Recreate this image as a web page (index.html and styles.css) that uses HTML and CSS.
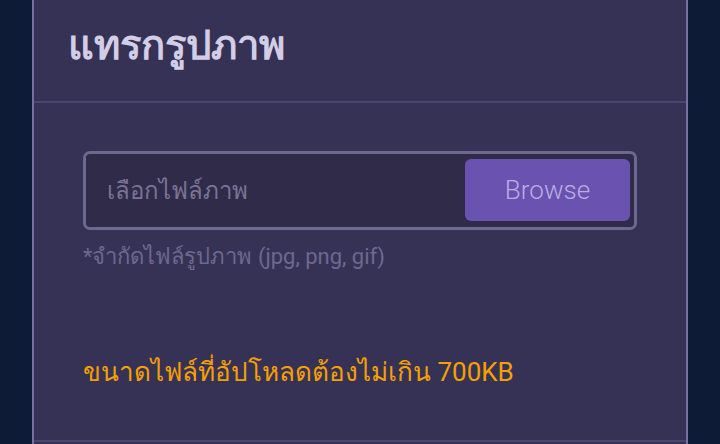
FILE: index.html
```html
<!DOCTYPE html>
<html lang="th">
<head>
<meta charset="utf-8">
<title>แทรกรูปภาพ</title>
<link rel="stylesheet" href="styles.css">
</head>
<body>
<div class="modal">
  <div class="modal-header">
    <h1 class="modal-title">แทรกรูปภาพ</h1>
  </div>
  <div class="modal-body">
    <div class="file-group">
      <div class="file-placeholder">เลือกไฟล์ภาพ</div>
      <button class="browse-btn" type="button">Browse</button>
    </div>
    <div class="file-hint">*จำกัดไฟล์รูปภาพ (jpg, png, gif)</div>
    <div class="file-warning">ขนาดไฟล์ที่อัปโหลดต้องไม่เกิน 700KB</div>
  </div>
</div>
</body>
</html>
```
FILE: styles.css
```css
html, body {
  margin: 0;
  padding: 0;
  height: 100%;
  overflow: hidden;
}
body {
  background: #0e1b36;
  font-family: Roboto, "Noto Sans", sans-serif;
}
.modal {
  margin-left: 32px;
  width: 652px;
  height: 444px;
  background: #363256;
  border-left: 2px solid #7670a4;
  border-right: 2px solid #7670a4;
}
.modal-header {
  height: 103px;
  box-sizing: border-box;
  padding: 20px 34px 0;
  border-bottom: 2px solid #4a4570;
}
.modal-title {
  margin: 0;
  font-size: 40px;
  line-height: 52px;
  font-weight: 700;
  color: #d4cde6;
}
.modal-body {
  height: 339px;
  box-sizing: border-box;
  padding: 48px 49px 0;
  border-bottom: 2px solid #4a4570;
}
.file-group {
  height: 79px;
  box-sizing: border-box;
  border: 3px solid #6e6890;
  border-radius: 7px;
  background: #2f2b48;
  display: flex;
  align-items: center;
  padding: 5px 4px 6px 21px;
}
.file-placeholder {
  flex: 1;
  font-size: 24px;
  color: #7a7396;
}
.browse-btn {
  width: 165px;
  height: 62px;
  border: none;
  border-radius: 6px;
  background: #6a52b0;
  color: #b8aee0;
  font-family: Roboto, sans-serif;
  font-weight: 300;
  font-size: 26px;
}
.file-hint {
  margin-top: 14px;
  font-size: 22px;
  line-height: 26px;
  color: #6e6890;
}
.file-warning {
  margin-top: 86px;
  font-size: 26px;
  line-height: 32px;
  color: #f5a000;
}
```
